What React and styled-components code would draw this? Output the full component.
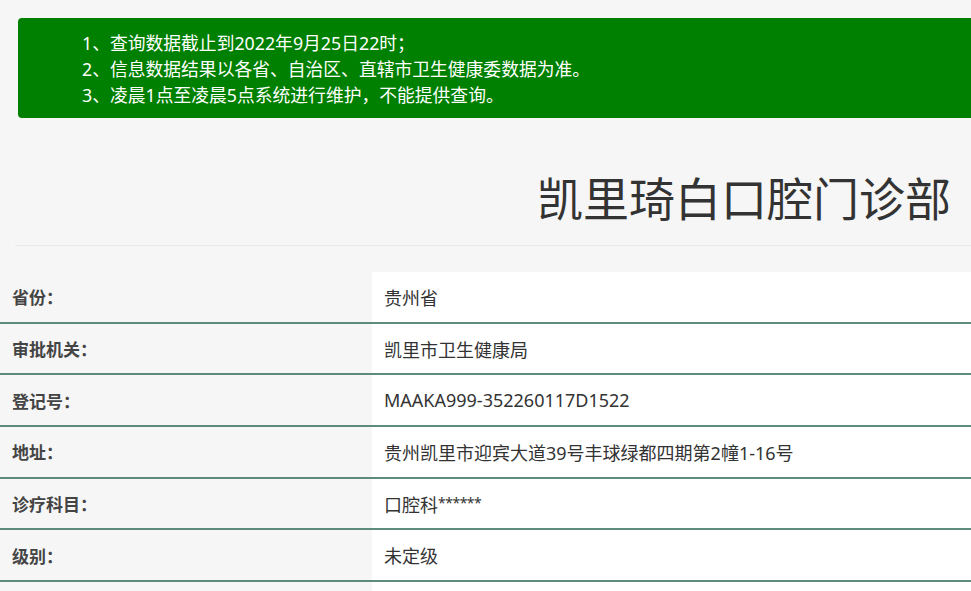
import React from "react";
import styled, { createGlobalStyle } from "styled-components";

const Global = createGlobalStyle`
  html, body {
    margin: 0;
    padding: 0;
    background: #f6f6f6;
    overflow: hidden;
  }
  body {
    font-family: "Noto Sans", "Noto Sans CJK SC", sans-serif;
    color: #333;
  }
`;

const Page = styled.div`
  width: 1000px;
  padding-top: 18px;
`;

const Notice = styled.div`
  margin-left: 18px;
  background: #008000;
  border-radius: 4px;
  padding: 12px 0 10px 64px;
  color: #fff;
  font-size: 17.8px;
  line-height: 26px;
`;

const NoticeLine = styled.div`
  white-space: nowrap;
`;

const Header = styled.div`
  margin-left: 15px;
  width: 956px;
  box-sizing: border-box;
  padding: 55px 20px 22px 0;
  border-bottom: 1px solid #e9e9e9;
  text-align: right;
`;

const Title = styled.h1`
  margin: 0;
  font-size: 46px;
  line-height: 50px;
  font-weight: 400;
  color: #333;
`;

const Table = styled.div`
  margin-top: 26px;
  display: grid;
  grid-template-columns: 372px 1fr;
`;

const Label = styled.div`
  height: 49.7px;
  display: flex;
  align-items: center;
  padding-left: 12px;
  background: #f6f6f6;
  border-bottom: 2px solid #5e8b7e;
  font-size: 17px;
  font-weight: 700;
  color: #444;
`;

const Value = styled.div`
  height: 49.7px;
  display: flex;
  align-items: center;
  padding-left: 12px;
  background: #fff;
  border-bottom: 2px solid #5e8b7e;
  font-size: 18px;
  color: #333;
`;

const Stars = styled.span`
  font-size: 14px;
  letter-spacing: -0.5px;
  align-self: flex-start;
  margin-top: 14px;
`;

const rows = [
  ["省份：", "贵州省"],
  ["审批机关：", "凯里市卫生健康局"],
  ["登记号：", "MAAKA999-352260117D1522"],
  ["地址：", "贵州凯里市迎宾大道39号丰球绿都四期第2幢1-16号"],
  ["诊疗科目：", <>口腔科<Stars>******</Stars></>],
  ["级别：", "未定级"],
  ["", ""],
];

export default function App() {
  return (
    <>
      <Global />
      <Page>
        <Notice>
          <NoticeLine>1、查询数据截止到2022年9月25日22时；</NoticeLine>
          <NoticeLine>2、信息数据结果以各省、自治区、直辖市卫生健康委数据为准。</NoticeLine>
          <NoticeLine>3、凌晨1点至凌晨5点系统进行维护，不能提供查询。</NoticeLine>
        </Notice>
        <Header>
          <Title>凯里琦白口腔门诊部</Title>
        </Header>
        <Table>
          {rows.map(([k, v], i) => (
            <React.Fragment key={i}>
              <Label>{k}</Label>
              <Value>{v}</Value>
            </React.Fragment>
          ))}
        </Table>
      </Page>
    </>
  );
}
